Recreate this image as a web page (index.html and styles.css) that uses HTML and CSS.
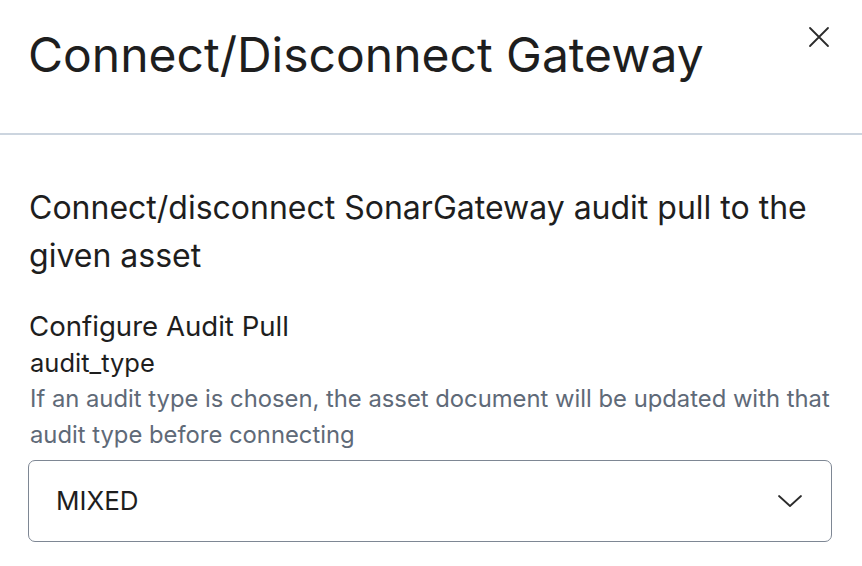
FILE: index.html
```html
<!DOCTYPE html>
<html lang="en">
<head>
<meta charset="utf-8">
<title>Connect/Disconnect Gateway</title>
<link rel="stylesheet" href="styles.css">
</head>
<body>
<div class="modal">
  <header class="modal-header">
    <h1 class="modal-title">Connect/Disconnect Gateway</h1>
    <button class="close-btn" aria-label="Close">
      <svg width="22" height="22" viewBox="0 0 22 22" fill="none" stroke="#2b2b2b" stroke-width="1.8" stroke-linecap="round">
        <path d="M2 2 L20 20 M20 2 L2 20"/>
      </svg>
    </button>
  </header>
  <section class="modal-body">
    <p class="description">Connect/disconnect SonarGateway audit pull to the given asset</p>
    <h2 class="section-title">Configure Audit Pull</h2>
    <div class="field">
      <div class="field-label">audit_type</div>
      <div class="field-help">If an audit type is chosen, the asset document will be updated with that audit type before connecting</div>
      <div class="select">
        <span class="select-value">MIXED</span>
        <svg class="chevron" width="26" height="16" viewBox="0 0 26 16" fill="none" stroke="#2b2b2b" stroke-width="1.8" stroke-linecap="round" stroke-linejoin="round">
          <path d="M2 3 L13 13 L24 3"/>
        </svg>
      </div>
    </div>
  </section>
</div>
</body>
</html>
```

FILE: styles.css
```css
* { box-sizing: border-box; }
html, body {
  margin: 0;
  padding: 0;
  background: #ffffff;
}
body {
  font-family: Inter, "Noto Sans", sans-serif;
  color: #1e1e1e;
}
.modal {
  width: 862px;
}
.modal-header {
  display: flex;
  justify-content: space-between;
  align-items: flex-start;
  padding: 26px 32px 49px 28px;
  border-bottom: 2px solid #ccd5df;
}
.modal-title {
  margin: 0;
  font-size: 48px;
  line-height: 58px;
  font-weight: 400;
  color: #1e1e1e;
}
.close-btn {
  border: 0;
  background: none;
  padding: 0;
  margin-top: 0;
  width: 22px;
  height: 22px;
  cursor: pointer;
  display: flex;
}
.modal-body {
  padding: 49px 30px 0 28px;
}
.description {
  margin: 0 0 0 1px;
  font-size: 32px;
  line-height: 48px;
  font-weight: 400;
  color: #1e1e1e;
}
.section-title {
  margin: 28px 0 0 1px;
  font-size: 27.6px;
  line-height: 36px;
  font-weight: 400;
  color: #1e1e1e;
}
.field-label {
  margin: 4px 0 0 2px;
  font-size: 25.5px;
  line-height: 30px;
  color: #1e1e1e;
}
.field-help {
  margin: 3px 0 0 2px;
  font-size: 23.8px;
  line-height: 36px;
  color: #5f6a78;
}
.select {
  margin-top: 7px;
  height: 82px;
  border: 1.5px solid #7e8794;
  border-radius: 7px;
  display: flex;
  align-items: center;
  justify-content: space-between;
  padding: 0 28px 0 27px;
}
.select-value {
  font-size: 26px;
  line-height: 32px;
  color: #1e1e1e;
}
.chevron {
  display: block;
}
```
